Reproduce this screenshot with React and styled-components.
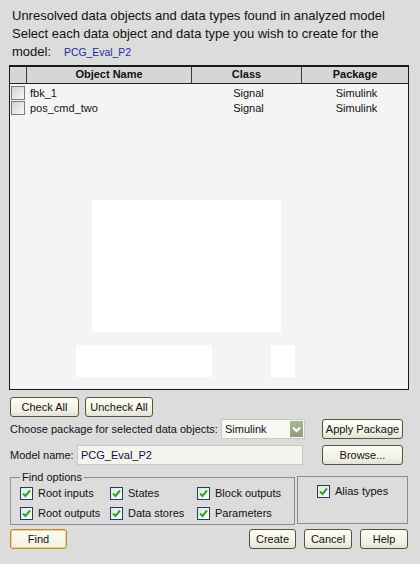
import React from "react";
import styled, { createGlobalStyle } from "styled-components";

const GlobalStyle = createGlobalStyle`
  html, body {
    margin: 0;
    padding: 0;
    background: #dcdcdc;
  }
  body {
    font-family: "Liberation Sans", Arial, sans-serif;
  }
`;

const rows = [
  { name: "fbk_1", cls: "Signal", pkg: "Simulink" },
  { name: "pos_cmd_two", cls: "Signal", pkg: "Simulink" },
];

const App = () => {
  return (
    <Wrapper>
      <GlobalStyle />
      <Intro>
        <div>Unresolved data objects and data types found in analyzed model</div>
        <div>Select each data object and data type you wish to create for the</div>
        <div>
          model:<ModelTag>PCG_Eval_P2</ModelTag>
        </div>
      </Intro>

      <Table>
        <HeadRow>
          <HeadCell />
          <HeadCell>Object Name</HeadCell>
          <HeadCell>Class</HeadCell>
          <HeadCell $last>Package</HeadCell>
        </HeadRow>
        <Body>
          {rows.map((r) => (
            <Row key={r.name}>
              <CheckCell>
                <TableBox />
              </CheckCell>
              <Cell>{r.name}</Cell>
              <Cell $center>{r.cls}</Cell>
              <Cell $center>{r.pkg}</Cell>
            </Row>
          ))}
          <Blank $left={82} $top={116} $w={189} $h={132} />
          <Blank $left={66} $top={261} $w={136} $h={32} />
          <Blank $left={261} $top={261} $w={24} $h={32} />
        </Body>
      </Table>

      <ButtonRow>
        <Button $w={69}>Check All</Button>
        <Button $w={68}>Uncheck All</Button>
      </ButtonRow>

      <FormRow $mt={2}>
        <Label $w={211}>Choose package for selected data objects:</Label>
        <Select>
          <span>Simulink</span>
          <Arrow>
            <svg width="9" height="7" viewBox="0 0 9 7">
              <path d="M1 1.5 L4.5 5 L8 1.5" stroke="#fff" strokeWidth="2" fill="none" />
            </svg>
          </Arrow>
        </Select>
        <Button $w={81} $ml={17}>Apply Package</Button>
      </FormRow>

      <FormRow $mt={6}>
        <Label $w={67}>Model name:</Label>
        <Input>PCG_Eval_P2</Input>
        <Button $w={81} $ml={19}>Browse...</Button>
      </FormRow>

      <OptionsRow>
        <Fieldset>
          <Legend>Find options</Legend>
          <OptionGrid>
            <Option><Check /> Root inputs</Option>
            <Option><Check /> States</Option>
            <Option><Check /> Block outputs</Option>
            <Option><Check /> Root outputs</Option>
            <Option><Check /> Data stores</Option>
            <Option><Check /> Parameters</Option>
          </OptionGrid>
        </Fieldset>
        <AliasBox>
          <Option><Check /> Alias types</Option>
        </AliasBox>
      </OptionsRow>

      <BottomRow>
        <FindButton>Find</FindButton>
        <Spacer />
        <Button $w={47}>Create</Button>
        <Button $w={48}>Cancel</Button>
        <Button $w={48}>Help</Button>
      </BottomRow>
    </Wrapper>
  );
};

const Check = () => (
  <CheckBox>
    <svg width="9" height="9" viewBox="0 0 9 9">
      <path d="M1 4.5 L3.5 7 L8 1.5" stroke="#2aa52a" strokeWidth="2" fill="none" />
    </svg>
  </CheckBox>
);

export default App;

const Wrapper = styled.div`
  width: 420px;
  height: 564px;
  box-sizing: border-box;
  padding-top: 7px;
  background: #dcdcdc;
  color: #000;
  display: flex;
  flex-direction: column;
  overflow: hidden;
`;

const Intro = styled.div`
  padding-left: 12px;
  font-size: 13px;
  line-height: 18px;
  color: #111;
`;

const ModelTag = styled.span`
  margin-left: 13px;
  font-size: 10.4px;
  color: #1c2a9c;
`;

const Table = styled.div`
  margin: 3px 0 0 9px;
  width: 400px;
  height: 325px;
  box-sizing: border-box;
  border: 1px solid #1a1a1a;
  border-top: 2px solid #1a1a1a;
  display: flex;
  flex-direction: column;
  background: #f4f4f4;
`;

const HeadRow = styled.div`
  display: grid;
  grid-template-columns: 17px 165px 110px 1fr;
  height: 16px;
  background: #d6d6d6;
  border-bottom: 1px solid #222;
`;

const HeadCell = styled.div`
  border-right: ${(p) => (p.$last ? "none" : "1px solid #3a3a3a")};
  font-size: 11px;
  font-weight: 700;
  line-height: 15px;
  text-align: center;
  color: #111;
`;

const Body = styled.div`
  position: relative;
  flex: 1;
  padding-top: 1px;
`;

const Row = styled.div`
  display: grid;
  grid-template-columns: 17px 165px 110px 1fr;
  height: 15px;
  align-items: center;
`;

const CheckCell = styled.div`
  display: flex;
  padding-left: 1px;
`;

const TableBox = styled.span`
  width: 12px;
  height: 12px;
  border: 1px solid #6f7f90;
  background: linear-gradient(135deg, #d2d2d2, #f7f7f7);
`;

const Cell = styled.div`
  font-size: 11px;
  color: #111;
  padding-left: 3px;
  text-align: ${(p) => (p.$center ? "center" : "left")};
  white-space: nowrap;
`;

const Blank = styled.div`
  position: absolute;
  left: ${(p) => p.$left}px;
  top: ${(p) => p.$top}px;
  width: ${(p) => p.$w}px;
  height: ${(p) => p.$h}px;
  background: #ffffff;
`;

const ButtonRow = styled.div`
  display: flex;
  gap: 6px;
  margin-top: 7px;
  padding-left: 10px;
`;

const Button = styled.button`
  width: ${(p) => p.$w}px;
  margin-left: ${(p) => p.$ml || 0}px;
  height: 20px;
  padding: 0;
  box-sizing: border-box;
  border: 1px solid #55553a;
  border-radius: 3px;
  background: linear-gradient(#fdfdf6, #f1f0e3 70%, #e3e2d2);
  font-family: "Liberation Sans", Arial, sans-serif;
  font-size: 11px;
  color: #111;
`;

const FindButton = styled(Button)`
  width: 57px;
  border: 1px solid #b88a3c;
  box-shadow: inset 0 0 0 1px #f4cf8c;
  background: linear-gradient(#fdfbf0, #f4f1e2);
`;

const FormRow = styled.div`
  display: flex;
  align-items: center;
  margin-top: ${(p) => p.$mt}px;
  padding-left: 10px;
  height: 20px;
`;

const Label = styled.div`
  width: ${(p) => p.$w}px;
  font-size: 11px;
  color: #111;
  white-space: nowrap;
`;

const Select = styled.div`
  width: 84px;
  height: 20px;
  box-sizing: border-box;
  border: 1px solid #c4cbb6;
  background: #f7f7f5;
  display: flex;
  align-items: center;
  justify-content: space-between;
  padding: 1px 1px 1px 3px;
  font-size: 11px;
  color: #111;
`;

const Arrow = styled.span`
  width: 13px;
  height: 16px;
  background: linear-gradient(#a9b597, #8f9c7d);
  display: flex;
  align-items: center;
  justify-content: center;
`;

const Input = styled.div`
  width: 226px;
  height: 20px;
  box-sizing: border-box;
  border: 1px solid #c8cdbb;
  background: #f4f4ef;
  padding-left: 3px;
  font-size: 11px;
  line-height: 18px;
  color: #101040;
`;

const OptionsRow = styled.div`
  display: flex;
  align-items: flex-end;
  margin-top: 6px;
  padding-left: 10px;
`;

const Fieldset = styled.fieldset`
  width: 285px;
  box-sizing: border-box;
  margin: 0;
  padding: 2px 0 3px 9px;
  border: 1px solid #8c8c8c;
  border-left-color: #9a9a9a;
  min-inline-size: 0;
`;

const Legend = styled.legend`
  padding: 0 2px;
  font-size: 11px;
  line-height: 12px;
  color: #111;
`;

const OptionGrid = styled.div`
  display: grid;
  grid-template-columns: 90px 87px auto;
  row-gap: 4px;
`;

const Option = styled.div`
  display: flex;
  align-items: center;
  gap: 5px;
  height: 16px;
  font-size: 11px;
  color: #111;
  white-space: nowrap;
`;

const CheckBox = styled.span`
  width: 11px;
  height: 11px;
  border: 1px solid #1e3f6e;
  background: linear-gradient(135deg, #e6e6e0, #fbfbf8);
  display: flex;
  align-items: center;
  justify-content: center;
`;

const AliasBox = styled.div`
  width: 111px;
  height: 48px;
  box-sizing: border-box;
  margin-left: 2px;
  margin-bottom: 1px;
  border: 1px solid #8c8c8c;
  padding: 6px 0 0 19px;
`;

const BottomRow = styled.div`
  display: flex;
  gap: 8px;
  margin-top: 4px;
  padding: 0 12px 0 10px;
`;

const Spacer = styled.div`
  flex: 1;
`;
